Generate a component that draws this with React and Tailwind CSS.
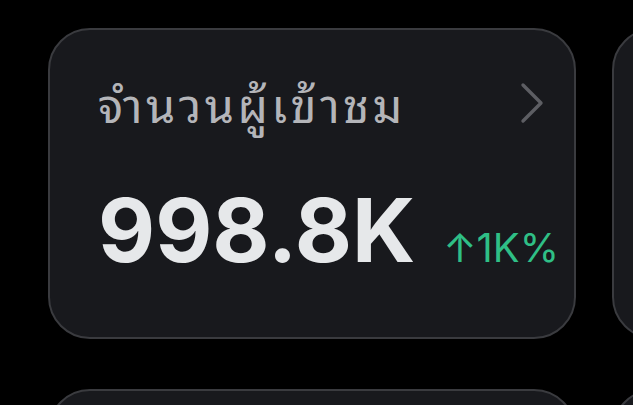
export default function App() {
  return (
    <div className="w-[633px] h-[405px] bg-black overflow-hidden">
      <div className="grid grid-cols-[528px_528px] gap-x-[36px] gap-y-[50px] pl-[48px] pt-[28px]">
        <div className="h-[311px] rounded-[42px] border-2 border-[#3a3b3f] bg-[#18191d] pl-[48px] pr-[28px] pt-[40px] flex flex-col">
          <div className="flex items-center justify-between h-[64px]">
            <span
              className="text-[47px] leading-[64px] tracking-[3.4px] text-[#b4b5b9]"
              style={{ fontFamily: '"Noto Sans Thai Looped", "Noto Sans Thai", Thonburi, "Noto Sans", sans-serif' }}
            >
              จำนวนผู้เข้าชม
            </span>
            <svg width="26" height="42" viewBox="0 0 26 42" className="mr-[1px] mt-[2px]">
              <path d="M4 3 L22 21 L4 39" fill="none" stroke="#5d5e63" strokeWidth="3.4" strokeLinecap="round" strokeLinejoin="round" />
            </svg>
          </div>
          <div className="flex items-baseline mt-[52px]" style={{ fontFamily: 'Inter, "Liberation Sans", sans-serif' }}>
            <span className="text-[88px] leading-none font-bold text-[#e6e8ea]">998.8K</span>
            <span className="ml-[28px] text-[40px] leading-none font-normal text-[#2fbf86]">↑1K%</span>
          </div>
        </div>
        <div className="h-[311px] rounded-[42px] border-2 border-[#3a3b3f] bg-[#18191d]" />
        <div className="h-[311px] rounded-[42px] border-2 border-[#3a3b3f] bg-[#18191d]" />
        <div className="h-[311px] rounded-[42px] border-2 border-[#3a3b3f] bg-[#18191d]" />
      </div>
    </div>
  );
}
